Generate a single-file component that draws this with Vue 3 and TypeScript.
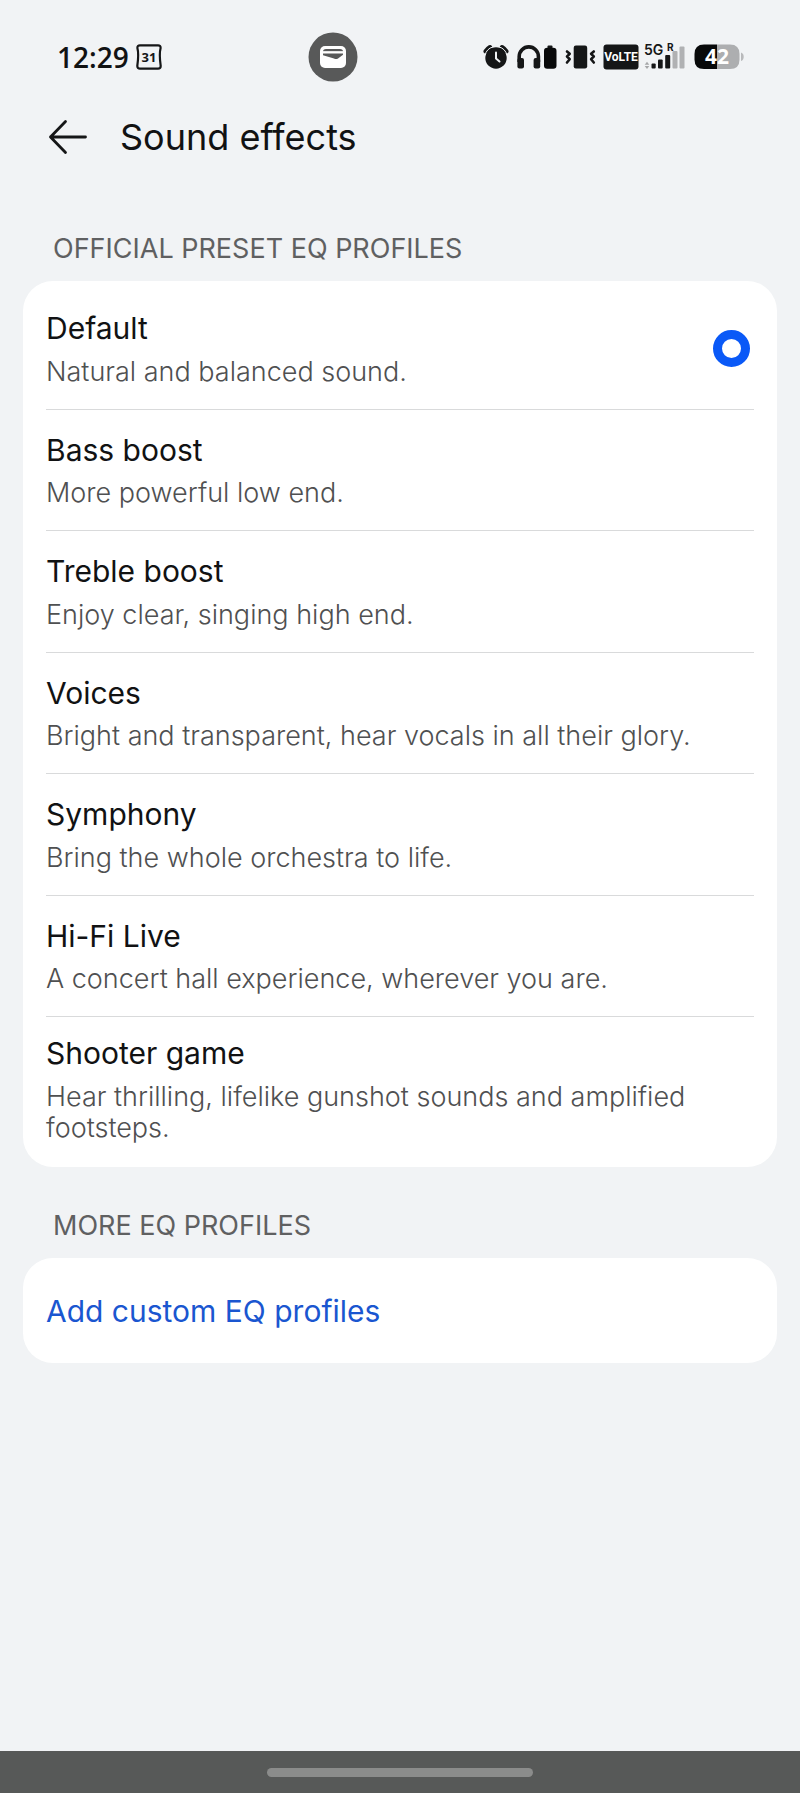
<script setup lang="ts">
import { ref } from 'vue'

interface Profile {
  id: string
  name: string
  description: string
}

const profiles: Profile[] = [
  { id: 'default', name: 'Default', description: 'Natural and balanced sound.' },
  { id: 'bass', name: 'Bass boost', description: 'More powerful low end.' },
  { id: 'treble', name: 'Treble boost', description: 'Enjoy clear, singing high end.' },
  { id: 'voices', name: 'Voices', description: 'Bright and transparent, hear vocals in all their glory.' },
  { id: 'symphony', name: 'Symphony', description: 'Bring the whole orchestra to life.' },
  { id: 'hifi', name: 'Hi-Fi Live', description: 'A concert hall experience, wherever you are.' },
  { id: 'shooter', name: 'Shooter game', description: 'Hear thrilling, lifelike gunshot sounds and amplified footsteps.' },
]

const selected = ref('default')
</script>

<template>
  <div class="screen">
    <div class="status">
      <span class="clock">12:29</span>
      <svg class="calendar" width="26" height="26" viewBox="0 0 26 26">
        <path d="M4 1.300H22Q24.800 1.300 24.600 4Q23 10 24.700 22Q24.700 24.700 22 24.700H4Q1.300 24.700 1.300 22Q3 10 1.400 4Q1.200 1.300 4 1.300Z" fill="none" stroke="#151617" stroke-width="2.200" />
        <text x="13" y="18" text-anchor="middle" class="t-cal">31</text>
      </svg>
      <svg class="wallet" width="50" height="50" viewBox="0 0 50 50">
        <circle cx="25" cy="25" r="24.500" fill="#585959" />
        <rect x="12" y="14" width="26" height="22" rx="5" fill="#fff" />
        <path d="M15 19.500Q15 17 18 17H32Q35 17 35 19.500Z" fill="#585959" />
        <path d="M15 21.500H35V22.700L30 26.500Q28 27.500 26 26.500L15 23.300Z" fill="#585959" />
        <path d="M15 19.300H35V20.900H15Z" fill="#fff" />
      </svg>

      <div class="indicators">
        <svg width="26" height="26" viewBox="0 0 26 26">
          <circle cx="13" cy="14" r="10.700" fill="#151617" />
          <path d="M2.800 7.300A13 13 0 0 1 7 3.300M23.200 7.300A13 13 0 0 0 19 3.300" fill="none" stroke="#151617" stroke-width="4.600" stroke-linecap="round" />
          <path d="M2 11.200A11.500 11.500 0 0 1 10 2.900M24 11.200A11.500 11.500 0 0 0 16 2.900" fill="none" stroke="#f1f3f5" stroke-width="1" />
          <path d="M13 8.500V14.500L16.500 17.500" fill="none" stroke="#f1f3f5" stroke-width="2" stroke-linecap="round" stroke-linejoin="round" />
        </svg>
        <svg width="42" height="26" viewBox="0 0 42 26">
          <path d="M3.200 18V12.500A9.600 9.600 0 0 1 22.400 12.500V18" fill="none" stroke="#151617" stroke-width="3.600" />
          <rect x="1.400" y="14" width="6.600" height="10.500" rx="2" fill="#151617" />
          <rect x="17.600" y="14" width="6.600" height="10.500" rx="2" fill="#151617" />
          <rect x="31.500" y="1.500" width="5" height="4" rx="1" fill="#151617" />
          <rect x="28" y="3.700" width="12.500" height="21" rx="3.200" fill="#08090a" />
        </svg>
        <svg width="31" height="26" viewBox="0 0 31 26">
          <rect x="8.700" y="1.500" width="13.500" height="23" rx="2.200" fill="#151617" />
          <path d="M2 7.500L4.700 9.800L2 12.500L4.700 15.200L2 18.500M28.800 7.500L26.100 9.800L28.800 12.500L26.100 15.200L28.800 18.500" fill="none" stroke="#151617" stroke-width="2.600" stroke-linejoin="round" stroke-linecap="round" />
        </svg>
        <svg width="36" height="26" viewBox="0 0 36 26">
          <rect x="0.500" y="0.500" width="35" height="25" rx="3" fill="#151617" />
          <text x="18" y="17" text-anchor="middle" class="t-volte">VoLTE</text>
        </svg>
        <svg class="signal" width="42" height="36" viewBox="0 -5 42 36">
          <rect x="28.500" y="7" width="5" height="17.500" rx="1" fill="#b0b1b3" />
          <rect x="35.500" y="2.500" width="5" height="22" rx="1" fill="#b0b1b3" />
          <rect x="7.500" y="19.500" width="4.200" height="5" rx="1" fill="#151617" />
          <rect x="14" y="15.500" width="4.700" height="9" rx="1" fill="#151617" />
          <rect x="21.200" y="11" width="5" height="13.500" rx="1" fill="#151617" />
          <path d="M0.700 20.700L3 17.700L5.300 20.700ZM0.700 22L3 25L5.300 22Z" fill="#a5a6a8" />
          <text x="0" y="11" class="t-net">5G</text>
          <text x="23" y="7" class="t-roam">R</text>
        </svg>
        <svg width="50" height="34" viewBox="0 -4 50 34">
          <path d="M23 0.500H36Q45.500 0.500 45.500 10V15.500Q45.500 25 36 25H23Z" fill="#adaeb0" />
          <path d="M23 0.500H10Q0.500 0.500 0.500 10V15.500Q0.500 25 10 25H23Z" fill="#08090a" />
          <path d="M47 8.500Q49.700 9.500 49.700 12.700Q49.700 16 47 17Z" fill="#b8b9bb" />
          <text x="23" y="20" text-anchor="middle" class="t-batt">42</text>
        </svg>
      </div>
    </div>

    <header class="bar">
      <button class="back" type="button" aria-label="Back">
        <svg width="40" height="36" viewBox="0 0 40 36">
          <path d="M17.500 2.500L2.500 18L17.500 33.500M2.500 18H37.500" fill="none" stroke="#151617" stroke-width="2.800" stroke-linecap="round" stroke-linejoin="round" />
        </svg>
      </button>
      <h1>Sound effects</h1>
    </header>

    <main>
      <h2 id="preset-heading">OFFICIAL PRESET EQ PROFILES</h2>
      <div class="card presets" role="radiogroup" aria-labelledby="preset-heading">
        <label v-for="p in profiles" :key="p.id" class="row" :for="p.id">
          <span class="copy">
            <span class="name">{{ p.name }}</span>
            <span class="desc">{{ p.description }}</span>
          </span>
          <input :id="p.id" v-model="selected" type="radio" name="profile" :value="p.id" />
        </label>
      </div>

      <h2>MORE EQ PROFILES</h2>
      <div class="card">
        <button class="add" type="button">Add custom EQ profiles</button>
      </div>
    </main>

    <div class="navbar"><span class="pill"></span></div>
  </div>
</template>

<style>
body {
  margin: 0;
  background: #f1f3f5;
}
</style>

<style scoped>
.screen {
  display: flex;
  flex-direction: column;
  min-height: 100vh;
  background: #f1f3f5;
  color: #111213;
  font-family: Inter, "Open Sans", sans-serif;
}

.status {
  display: flex;
  align-items: center;
  height: 114px;
  padding: 0 56px 0 57px;
}

.status svg {
  display: block;
  flex: none;
}

.clock {
  font: 600 28px/36px "Open Sans", sans-serif;
}

.calendar {
  margin-left: 7px;
}

.wallet {
  margin-left: 146px;
}

.indicators {
  display: flex;
  align-items: center;
  gap: 7px;
  margin-left: auto;
}

.signal {
  margin: 0 1px 0 -2px;
}

.t-cal {
  font: 700 13px "Open Sans", sans-serif;
  fill: #151617;
}

.t-volte {
  font: 700 12px Roboto, sans-serif;
  fill: #fff;
}

.t-net {
  font: 600 14px Inter, sans-serif;
  fill: #151617;
}

.t-roam {
  font: 700 10px Inter, sans-serif;
  fill: #151617;
}

.t-batt {
  font: 700 21px "Open Sans", sans-serif;
  fill: #fff;
}

.bar {
  display: flex;
  align-items: center;
  gap: 32px;
  height: 46px;
  padding: 0 48px;
}

.back {
  display: flex;
  padding: 0;
  border: 0;
  background: none;
}

h1 {
  margin: 0;
  font-size: 36px;
  line-height: 46px;
  font-weight: 400;
}

main {
  flex: 1;
  padding: 30px 23px;
}

h2 {
  margin: 41px 30px 14px;
  font-size: 27px;
  line-height: 36px;
  font-weight: 400;
  color: #5f6061;
}

.card {
  border-radius: 30px;
  background: #fff;
  overflow: hidden;
}

.presets {
  padding: 7px 0;
}

.row {
  display: flex;
  align-items: center;
  justify-content: space-between;
  gap: 12px;
  margin: 0 23px;
  padding: 22px 4px 22px 0;
  border-bottom: 1px solid #d9dadb;
}

.row:last-child {
  padding: 18px 4px 17px 0;
  border-bottom: 0;
}

.copy {
  display: flex;
  flex-direction: column;
  gap: 8px;
}

.name {
  font-size: 30px;
  line-height: 1.25;
}

.desc {
  font-size: 27px;
  line-height: 31px;
  font-weight: 300;
  color: #4f5051;
}

input {
  appearance: none;
  flex: none;
  width: 37px;
  height: 37px;
  margin: 0;
  border-radius: 50%;
}

input:checked {
  border: 9px solid #0a59f7;
}

.add {
  display: block;
  width: 100%;
  padding: 34px 23px 33px;
  border: 0;
  background: none;
  color: #1a56d0;
  font: 400 30px/38px Inter, "Open Sans", sans-serif;
  text-align: left;
}

.navbar {
  display: flex;
  justify-content: center;
  align-items: center;
  height: 42px;
  background: #575958;
}

.pill {
  width: calc(100% / 3);
  height: 9px;
  border-radius: 5px;
  background: #8b8c8b;
}
</style>
